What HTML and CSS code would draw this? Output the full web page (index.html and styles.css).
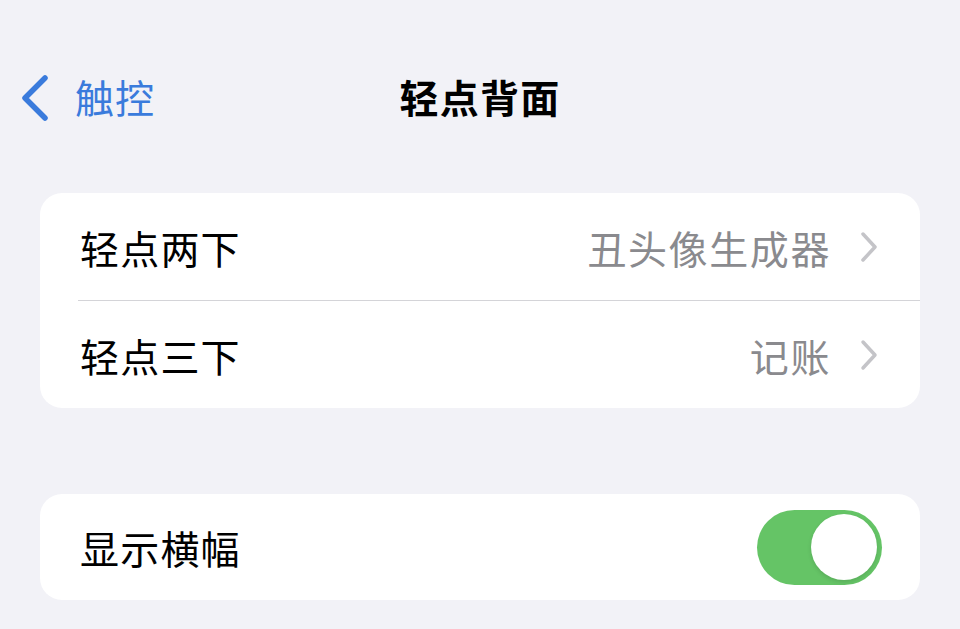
FILE: index.html
```html
<!DOCTYPE html>
<html lang="zh-CN">
<head>
<meta charset="utf-8">
<title>轻点背面</title>
<link rel="stylesheet" href="styles.css">
</head>
<body>
<div class="screen">
  <header class="nav">
    <a class="back" href="#">
      <svg class="back-chevron" width="32" height="48" viewBox="0 0 32 48"><polyline points="25,5 5,25 25,45" fill="none" stroke="currentColor" stroke-width="5.5" stroke-linecap="round" stroke-linejoin="round"/></svg>
      <span class="back-label">触控</span>
    </a>
    <h1 class="title">轻点背面</h1>
    <div class="nav-spacer"></div>
  </header>

  <section class="card">
    <div class="row">
      <span class="label">轻点两下</span>
      <span class="value">丑头像生成器</span>
      <svg class="chevron" width="20" height="32" viewBox="0 0 20 32"><polyline points="4,3 16,16 4,29" fill="none" stroke="currentColor" stroke-width="3.5" stroke-linecap="round" stroke-linejoin="round"/></svg>
    </div>
    <div class="sep"></div>
    <div class="row">
      <span class="label">轻点三下</span>
      <span class="value">记账</span>
      <svg class="chevron" width="20" height="32" viewBox="0 0 20 32"><polyline points="4,3 16,16 4,29" fill="none" stroke="currentColor" stroke-width="3.5" stroke-linecap="round" stroke-linejoin="round"/></svg>
    </div>
  </section>

  <section class="card card-second">
    <div class="row row-toggle">
      <span class="label">显示横幅</span>
      <span class="toggle on"><span class="knob"></span></span>
    </div>
  </section>
</div>
</body>
</html>
```
FILE: styles.css
```css
* { box-sizing: border-box; }
html, body {
  margin: 0;
  padding: 0;
  background: #f2f2f7;
}
body {
  font-family: "Noto Sans CJK SC", "Noto Sans", sans-serif;
  color: #000;
  width: 960px;
  height: 629px;
  overflow: hidden;
}
.screen {
  display: flex;
  flex-direction: column;
}
.nav {
  display: grid;
  grid-template-columns: 1fr auto 1fr;
  align-items: center;
  height: 50px;
  margin-top: 70px;
  padding: 0 22px;
}
.back {
  display: flex;
  align-items: center;
  gap: 23px;
  color: #3a7bdc;
  text-decoration: none;
}
.back-chevron { display: block; margin-left: -2px; margin-top: 3px; }
.back-label {
  font-size: 39px;
  line-height: 50px;
  letter-spacing: 1px;
}
.title {
  margin: 0;
  font-size: 39px;
  line-height: 50px;
  font-weight: 700;
  letter-spacing: 1.3px;
}
.card {
  margin: 73px 40px 0;
  background: #fff;
  border-radius: 22px;
  overflow: hidden;
}
.card-second {
  margin-top: 86px;
}
.row {
  display: flex;
  align-items: center;
  height: 107px;
  padding: 0 40px 0 40px;
}
.row-toggle {
  height: 106px;
  padding-right: 38px;
}
.label {
  font-size: 39px;
  letter-spacing: 1.2px;
  flex: 1;
}
.value {
  font-size: 39px;
  letter-spacing: 1.6px;
  color: #8a8a8e;
  margin-right: 28px;
}
.chevron {
  color: #c4c4c8;
  display: block;
  margin-right: 1px;
}
.sep {
  height: 1px;
  background: #d4d4d8;
  margin-left: 38px;
}
.toggle {
  position: relative;
  width: 125px;
  height: 75px;
  border-radius: 38px;
  background: #65c466;
  display: block;
}
.toggle .knob {
  position: absolute;
  top: 4.5px;
  right: 5px;
  width: 66px;
  height: 66px;
  border-radius: 50%;
  background: #fff;
  box-shadow: 0 2px 4px rgba(0,0,0,0.12);
}
```
